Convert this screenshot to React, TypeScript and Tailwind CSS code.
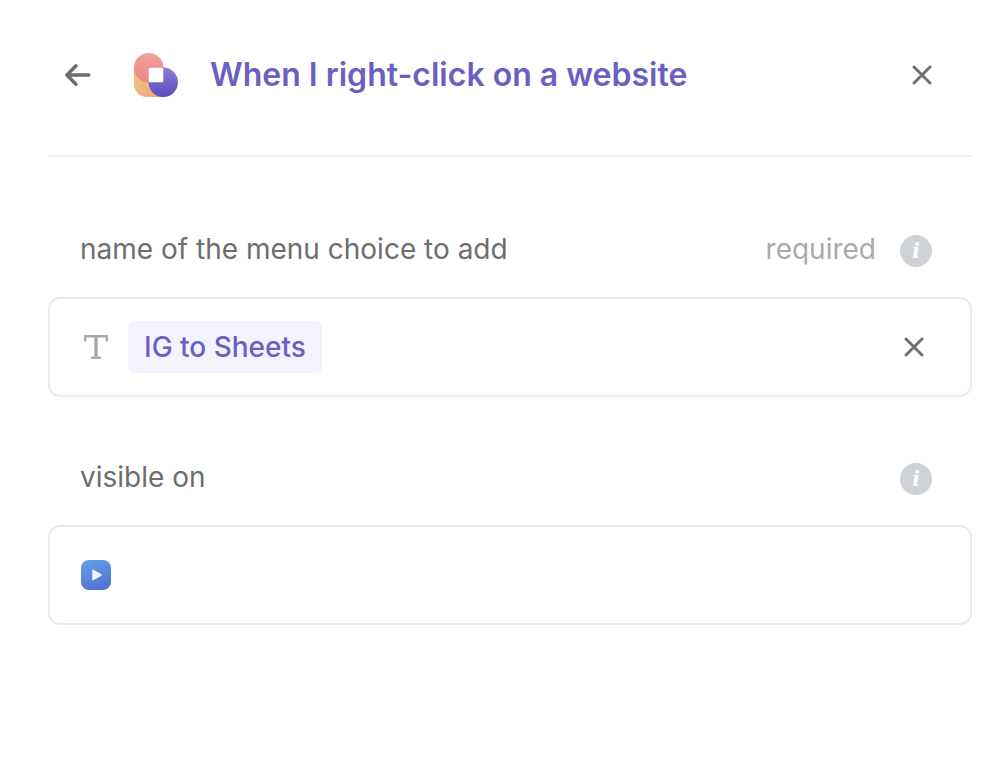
import { useState } from "react";

function BackIcon() {
  return (
    <svg width="28" height="28" viewBox="0 0 28 28" fill="none" stroke="currentColor" strokeWidth="3.4" strokeLinecap="round" strokeLinejoin="round" aria-hidden="true">
      <path d="M25 14H3M12 4.8L2.8 14L12 23.2" />
    </svg>
  );
}

function CloseIcon() {
  return (
    <svg width="20" height="20" viewBox="0 0 20 20" fill="none" stroke="currentColor" strokeWidth="2.9" strokeLinecap="round" aria-hidden="true">
      <path d="M2 2L18 18M18 2L2 18" />
    </svg>
  );
}

function AppLogo() {
  return (
    <svg width="44" height="44" viewBox="0 0 44 44" aria-hidden="true">
      <defs>
        <linearGradient id="logoOrange" x1="0" y1="0" x2="1" y2="1">
          <stop offset="0.3" stopColor="#f0bc82" />
          <stop offset="1" stopColor="#eda372" />
        </linearGradient>
        <linearGradient id="logoRed" x1="0" y1="0" x2="0" y2="1">
          <stop offset="0" stopColor="#f2a09c" />
          <stop offset="1" stopColor="#ee8583" />
        </linearGradient>
        <linearGradient id="logoPurple" x1="0" y1="0" x2="0" y2="1">
          <stop offset="0" stopColor="#8e7bcf" />
          <stop offset="1" stopColor="#5b4cc0" />
        </linearGradient>
      </defs>
      <path d="M0 14H30V44H13A13 13 0 0 1 0 31Z" fill="url(#logoOrange)" />
      <circle cx="14.7" cy="14.7" r="14.7" fill="url(#logoRed)" />
      <circle cx="29.3" cy="29.3" r="14.7" fill="url(#logoPurple)" />
      <rect x="14.7" y="14.7" width="14.6" height="14.6" rx="1.6" fill="#fff" />
    </svg>
  );
}

function TextIcon() {
  return (
    <svg width="24" height="24" viewBox="0 0 24 24" fill="none" stroke="#a9a9a9" strokeLinecap="round" strokeLinejoin="round" className="shrink-0" aria-hidden="true">
      <path d="M1.2 5.5V1.3H22.8V5.5" strokeWidth="2.4" />
      <path d="M12 1V23" strokeWidth="3.4" strokeLinecap="butt" />
      <path d="M8 22.8H16" strokeWidth="2.4" />
    </svg>
  );
}

function SiteIcon() {
  return (
    <svg width="30" height="30" viewBox="0 0 30 30" className="shrink-0" aria-hidden="true">
      <defs>
        <linearGradient id="siteBlue" x1="0" y1="0" x2="0.3" y2="1">
          <stop offset="0" stopColor="#62a2e8" />
          <stop offset="1" stopColor="#5575d3" />
        </linearGradient>
      </defs>
      <rect width="30" height="30" rx="8" fill="url(#siteBlue)" />
      <path d="M12 10.4L20 15L12 19.6Z" fill="#edf1fc" stroke="#edf1fc" strokeWidth="1.6" strokeLinejoin="round" />
    </svg>
  );
}

function InfoButton({ label }: { label: string }) {
  return (
    <button
      type="button"
      aria-label={label}
      className="flex size-8 items-center justify-center rounded-full bg-[#cfd2d6] font-['DejaVu_Serif',serif] text-xl font-bold italic leading-none text-white"
    >
      i
    </button>
  );
}

export default function App() {
  const [menuName, setMenuName] = useState("IG to Sheets");
  const [site, setSite] = useState("");

  return (
    <main className="min-h-screen bg-white pl-12 pr-9 font-['Inter',sans-serif] text-[28px] leading-9 text-[#6d6e6e]">
      {/* Header */}
      <header className="flex items-center border-b-2 border-[#f1f1f1] pb-[54px] pl-4 pr-10 pt-12">
        <button type="button" aria-label="Back" className="mr-[42px]">
          <BackIcon />
        </button>
        <AppLogo />
        <h1 className="ml-8 flex-1 text-[32px] font-semibold leading-[53px] text-[#6c5fc2]">
          When I right-click on a website
        </h1>
        <button type="button" aria-label="Close">
          <CloseIcon />
        </button>
      </header>

      {/* Menu name */}
      <section className="pt-[76px]">
        <div className="flex items-center pl-8 pr-10">
          <h2 className="flex-1 pb-1 leading-8">name of the menu choice to add</h2>
          <span className="mr-6 pb-1 leading-8 text-[#a9aaab]">required</span>
          <InfoButton label="About the menu name" />
        </div>
        <div className="mt-7 flex h-[100px] items-center rounded-xl border-2 border-[#ebebeb] pl-[34px] pr-[46px]">
          <TextIcon />
          {menuName && (
            <>
              <span className="ml-5 rounded-md bg-[#f4f3fc] px-4 py-2 font-medium text-[#6c5fc2]">
                {menuName}
              </span>
              <button type="button" aria-label="Clear menu name" className="ml-auto" onClick={() => setMenuName("")}>
                <CloseIcon />
              </button>
            </>
          )}
        </div>
      </section>

      {/* Sites */}
      <section className="pt-16">
        <div className="flex items-center pl-8 pr-10">
          <label htmlFor="visible-on" className="flex-1 pb-1 leading-8">visible on</label>
          <InfoButton label="About visible on" />
        </div>
        <div className="mt-7 flex h-[100px] items-center rounded-xl border-2 border-[#ebebeb] px-[31px]">
          <SiteIcon />
          <input
            id="visible-on"
            type="text"
            value={site}
            onChange={(e) => setSite(e.target.value)}
            className="ml-4 min-w-0 flex-1 outline-none"
          />
        </div>
      </section>
    </main>
  );
}
